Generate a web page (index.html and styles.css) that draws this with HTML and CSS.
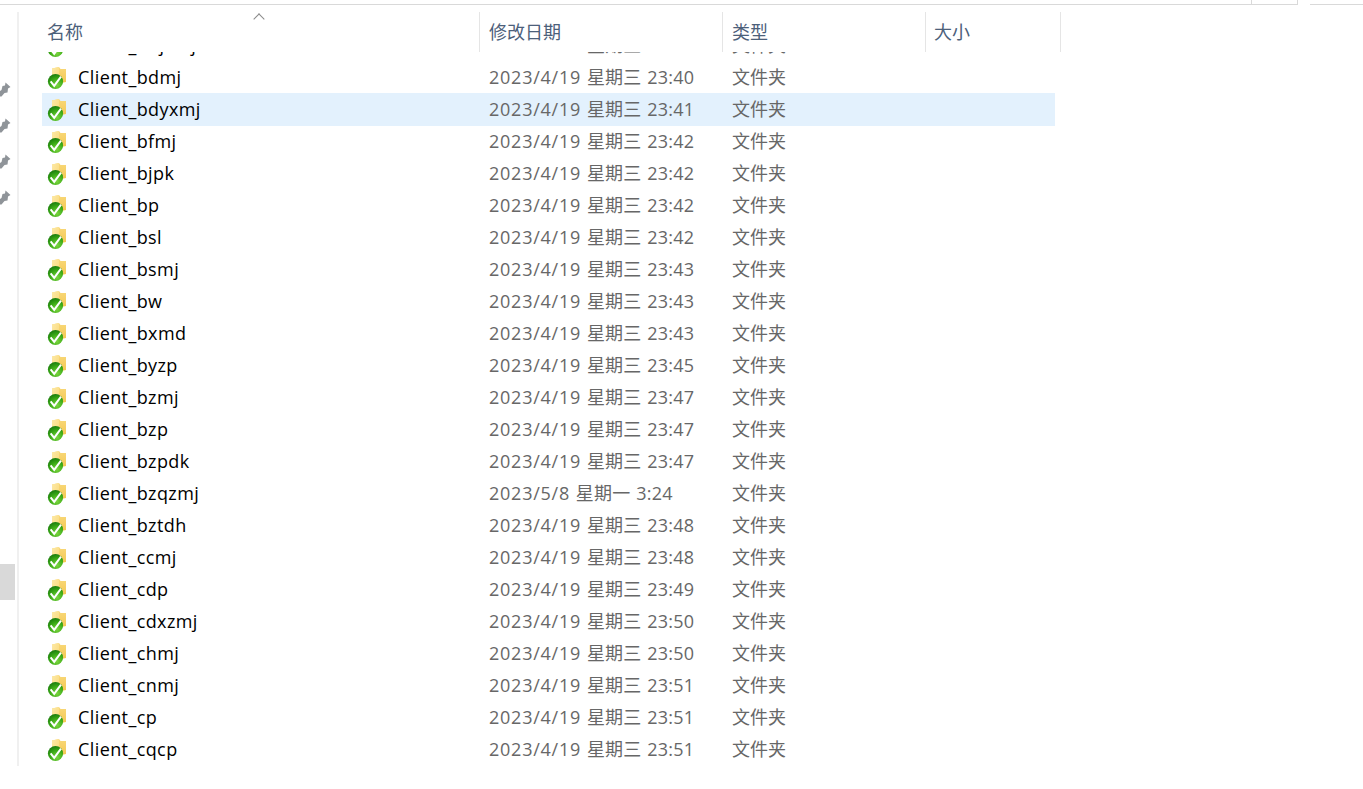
FILE: index.html
```html
<!DOCTYPE html>
<html lang="zh-CN">
<head>
    <meta charset="utf-8">
    <title>文件夹</title>
    <link rel="stylesheet" href="styles.css">
</head>
<body>
    <svg class="defs" width="0" height="0">
        <defs>
            <linearGradient id="folder-fill" x1="0" y1="0" x2="0" y2="1">
                <stop offset="0" stop-color="#f8d879"/>
                <stop offset="1" stop-color="#f5c64f"/>
            </linearGradient>
            <linearGradient id="folder-front" x1="0" y1="0" x2="1" y2="1">
                <stop offset="0" stop-color="#fde9a6"/>
                <stop offset="1" stop-color="#f9d878"/>
            </linearGradient>
            <radialGradient id="ok-fill" cx="0.6" cy="0.75" r="0.75">
                <stop offset="0" stop-color="#7bd63f"/>
                <stop offset="0.6" stop-color="#3aa915"/>
                <stop offset="1" stop-color="#1b7d0e"/>
            </radialGradient>
            <symbol id="folder-ok" viewBox="0 0 22 24">
                <path d="M7 1.5 L14 0 L15.5 2 L21 2 L21 15 L7 18 Z" fill="url(#folder-fill)"/>
                <path d="M7 1.5 L14 0 L14 16 L7 18 Z" fill="url(#folder-front)"/>
                <circle cx="10.5" cy="14.5" r="7.6" fill="url(#ok-fill)"/>
                <path d="M5.6 14.4 L9.2 18.8 L16 9.6" fill="none" stroke="#ffffff" stroke-width="2"/>
            </symbol>
            <symbol id="pin" viewBox="0 0 11 15">
                <path d="M5.5 0.5 L10.5 5 L8 6.5 L7.5 10.5 L4.5 11 L1.5 14.5 L0 14.5 L0 9 L1.5 8 L2.5 4 L5 3.5 Z" fill="#8f9499"/>
            </symbol>
        </defs>
    </svg>

    <div class="topbar">
        <div class="top-line top-a"></div>
        <div class="top-line top-b"></div>
        <div class="top-line top-side"></div>
    </div>

    <div class="window">
        <aside class="sidebar">
            <svg class="pin"><use href="#pin"/></svg>
            <svg class="pin"><use href="#pin"/></svg>
            <svg class="pin"><use href="#pin"/></svg>
            <svg class="pin"><use href="#pin"/></svg>
            <div class="thumb"></div>
        </aside>

        <main class="files">
            <div class="head">
                <div class="col col-name">名称<span class="sort"></span></div>
                <div class="col col-date">修改日期</div>
                <div class="col col-type">类型</div>
                <div class="col col-size">大小</div>
            </div>
            <div class="list">
                <div class="row row-cut"><svg class="ico"><use href="#folder-ok"/></svg><span class="name">Client_bdjxmj</span><span class="date"><span class="day">2023/4/19</span> 星期三 23:39</span><span class="type">文件夹</span></div>
                <div class="row"><svg class="ico"><use href="#folder-ok"/></svg><span class="name">Client_bdmj</span><span class="date"><span class="day">2023/4/19</span> 星期三 23:40</span><span class="type">文件夹</span></div>
                <div class="row active"><svg class="ico"><use href="#folder-ok"/></svg><span class="name">Client_bdyxmj</span><span class="date"><span class="day">2023/4/19</span> 星期三 23:41</span><span class="type">文件夹</span></div>
                <div class="row"><svg class="ico"><use href="#folder-ok"/></svg><span class="name">Client_bfmj</span><span class="date"><span class="day">2023/4/19</span> 星期三 23:42</span><span class="type">文件夹</span></div>
                <div class="row"><svg class="ico"><use href="#folder-ok"/></svg><span class="name">Client_bjpk</span><span class="date"><span class="day">2023/4/19</span> 星期三 23:42</span><span class="type">文件夹</span></div>
                <div class="row"><svg class="ico"><use href="#folder-ok"/></svg><span class="name">Client_bp</span><span class="date"><span class="day">2023/4/19</span> 星期三 23:42</span><span class="type">文件夹</span></div>
                <div class="row"><svg class="ico"><use href="#folder-ok"/></svg><span class="name">Client_bsl</span><span class="date"><span class="day">2023/4/19</span> 星期三 23:42</span><span class="type">文件夹</span></div>
                <div class="row"><svg class="ico"><use href="#folder-ok"/></svg><span class="name">Client_bsmj</span><span class="date"><span class="day">2023/4/19</span> 星期三 23:43</span><span class="type">文件夹</span></div>
                <div class="row"><svg class="ico"><use href="#folder-ok"/></svg><span class="name">Client_bw</span><span class="date"><span class="day">2023/4/19</span> 星期三 23:43</span><span class="type">文件夹</span></div>
                <div class="row"><svg class="ico"><use href="#folder-ok"/></svg><span class="name">Client_bxmd</span><span class="date"><span class="day">2023/4/19</span> 星期三 23:43</span><span class="type">文件夹</span></div>
                <div class="row"><svg class="ico"><use href="#folder-ok"/></svg><span class="name">Client_byzp</span><span class="date"><span class="day">2023/4/19</span> 星期三 23:45</span><span class="type">文件夹</span></div>
                <div class="row"><svg class="ico"><use href="#folder-ok"/></svg><span class="name">Client_bzmj</span><span class="date"><span class="day">2023/4/19</span> 星期三 23:47</span><span class="type">文件夹</span></div>
                <div class="row"><svg class="ico"><use href="#folder-ok"/></svg><span class="name">Client_bzp</span><span class="date"><span class="day">2023/4/19</span> 星期三 23:47</span><span class="type">文件夹</span></div>
                <div class="row"><svg class="ico"><use href="#folder-ok"/></svg><span class="name">Client_bzpdk</span><span class="date"><span class="day">2023/4/19</span> 星期三 23:47</span><span class="type">文件夹</span></div>
                <div class="row"><svg class="ico"><use href="#folder-ok"/></svg><span class="name">Client_bzqzmj</span><span class="date"><span class="day">2023/5/8</span> 星期一 3:24</span><span class="type">文件夹</span></div>
                <div class="row"><svg class="ico"><use href="#folder-ok"/></svg><span class="name">Client_bztdh</span><span class="date"><span class="day">2023/4/19</span> 星期三 23:48</span><span class="type">文件夹</span></div>
                <div class="row"><svg class="ico"><use href="#folder-ok"/></svg><span class="name">Client_ccmj</span><span class="date"><span class="day">2023/4/19</span> 星期三 23:48</span><span class="type">文件夹</span></div>
                <div class="row"><svg class="ico"><use href="#folder-ok"/></svg><span class="name">Client_cdp</span><span class="date"><span class="day">2023/4/19</span> 星期三 23:49</span><span class="type">文件夹</span></div>
                <div class="row"><svg class="ico"><use href="#folder-ok"/></svg><span class="name">Client_cdxzmj</span><span class="date"><span class="day">2023/4/19</span> 星期三 23:50</span><span class="type">文件夹</span></div>
                <div class="row"><svg class="ico"><use href="#folder-ok"/></svg><span class="name">Client_chmj</span><span class="date"><span class="day">2023/4/19</span> 星期三 23:50</span><span class="type">文件夹</span></div>
                <div class="row"><svg class="ico"><use href="#folder-ok"/></svg><span class="name">Client_cnmj</span><span class="date"><span class="day">2023/4/19</span> 星期三 23:51</span><span class="type">文件夹</span></div>
                <div class="row"><svg class="ico"><use href="#folder-ok"/></svg><span class="name">Client_cp</span><span class="date"><span class="day">2023/4/19</span> 星期三 23:51</span><span class="type">文件夹</span></div>
                <div class="row"><svg class="ico"><use href="#folder-ok"/></svg><span class="name">Client_cqcp</span><span class="date"><span class="day">2023/4/19</span> 星期三 23:51</span><span class="type">文件夹</span></div>
            </div>
        </main>
    </div>
</body>
</html>
```

FILE: styles.css
```css
html, body {
    margin: 0;
    padding: 0;
    height: 789px;
    overflow: hidden;
    background-color: #ffffff;
    font-family: 'Open Sans', 'Noto Sans CJK SC', sans-serif;
    font-size: 18px;
}

.defs {
    position: absolute;
}

.topbar {
    display: flex;
    height: 5px;
}

.top-line {
    box-sizing: border-box;
    border-bottom: 1px solid #d9d9d9;
}

.top-a {
    width: 1252px;
    border-right: 1px solid #d9d9d9;
}

.top-b {
    width: 46px;
    border-right: 1px solid #d9d9d9;
    margin-right: 12px;
}

.top-side {
    flex: 1;
}

.window {
    display: flex;
    height: 754px;
    margin-top: 7px;
}

.sidebar {
    position: relative;
    width: 17px;
    border-right: 2px solid #f0f0f0;
    padding-top: 70px;
    display: flex;
    flex-direction: column;
    gap: 21px;
}

.pin {
    width: 11px;
    height: 15px;
    flex: none;
}

.thumb {
    position: absolute;
    left: 0;
    top: 552px;
    width: 15px;
    height: 36px;
    background-color: #d9d9d9;
}

.files {
    width: 1043px;
}

.head {
    display: flex;
    height: 40px;
    color: #4c607a;
}

.col {
    box-sizing: border-box;
    position: relative;
    padding-left: 9px;
    line-height: 41px;
    border-right: 1px solid #e5e5e5;
}

.col-name {
    width: 461px;
    padding-left: 28px;
}

.col-date {
    width: 243px;
}

.col-type {
    width: 203px;
}

.col-size {
    width: 135px;
    padding-left: 8px;
}

.sort {
    position: absolute;
    left: 236px;
    top: 3px;
    width: 7px;
    height: 7px;
    border-left: 1px solid #8a8a8a;
    border-top: 1px solid #8a8a8a;
    transform: rotate(45deg);
}

.list {
    height: 714px;
    overflow: hidden;
}

.row {
    display: flex;
    align-items: center;
    height: 32px;
    width: 1013px;
    margin-left: 23px;
    color: #676767;
}

.row-cut {
    margin-top: -23px;
}

.row.active {
    background-color: #e3f1fd;
    box-shadow: 0 1px 0 #e3f1fd;
}

.ico {
    width: 22px;
    height: 24px;
    flex: none;
    margin-left: 3px;
    margin-top: 4px;
}

.name {
    width: 411px;
    padding-left: 11px;
    color: #000000;
    letter-spacing: 0.4px;
}

.date {
    width: 243px;
    flex: none;
    margin-top: -2px;
    letter-spacing: 0.2px;
    word-spacing: 1px;
}

.day {
    letter-spacing: 0.75px;
}

.type {
    flex: none;
    margin-top: -2px;
}
```
